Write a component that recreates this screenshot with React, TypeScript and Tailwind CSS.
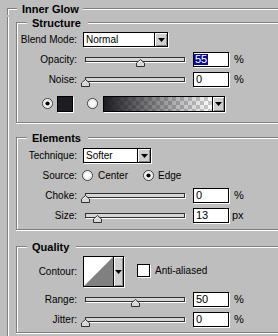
import React from "react";

const Tri = () => (
  <svg width="7" height="4" viewBox="0 0 7 4" className="shrink-0">
    <path d="M0 0H7L3.5 4Z" fill="#000" />
  </svg>
);

function Radio({ on }: { on?: boolean }) {
  return (
    <svg width="11" height="11" viewBox="0 0 11 11" className="shrink-0">
      <circle cx="5.5" cy="5.5" r="5" fill="#fff" stroke="#3a3a3a" />
      <circle cx="5.5" cy="5.5" r="3.6" fill="none" stroke="#e6e6e6" />
      {on && <circle cx="5.5" cy="5.5" r="2.1" fill="#000" />}
    </svg>
  );
}

function TitleRow({ title, corner, text }: { title: string; corner: string; text: string }) {
  return (
    <div className="flex h-[12px] items-center">
      <div className={`self-stretch flex flex-col ${corner}`}>
        <div className="h-[5px]" />
        <div className="flex-1 border-l border-t border-[#808080] shadow-[inset_1px_1px_0_#fff]" />
      </div>
      <span className={`text-[11px] font-bold leading-[12px] ${text}`}>{title}</span>
      <div className="h-[2px] flex-1 border-t border-b border-t-[#808080] border-b-white" />
    </div>
  );
}

function InnerGroup({
  title,
  top,
  body,
  children,
}: {
  title: string;
  top: string;
  body: string;
  children: React.ReactNode;
}) {
  return (
    <div className={top}>
      <TitleRow title={title} corner="w-[11px]" text="pl-[5px] pr-[7px]" />
      <div
        className={`border-l border-b border-[#808080] shadow-[inset_1px_0_0_#fff,0_1px_0_#fff] ${body}`}
      >
        {children}
      </div>
    </div>
  );
}

function Row({ label, h, children }: { label: string; h?: string; children?: React.ReactNode }) {
  return (
    <div className={`flex items-center ${h ?? "h-[15px]"}`}>
      <span className="w-[60px] shrink-0 text-right whitespace-nowrap">{label}</span>
      {children}
    </div>
  );
}

function Select({ w, text }: { w: string; text: string }) {
  return (
    <div className={`ml-[6px] flex h-[15px] border border-black bg-white shadow-[1px_1px_0_#fff] ${w}`}>
      <span className="flex-1 pl-[2px] leading-[13px]">{text}</span>
      <div className="flex w-[13px] items-center justify-center border-l border-black bg-[#cfcfcf] shadow-[inset_1px_1px_0_#fff,inset_-1px_-1px_0_#8a8a8a]">
        <Tri />
      </div>
    </div>
  );
}

function Slider({ v }: { v: number }) {
  return (
    <div className="relative ml-[4px] h-[15px] w-[112px] shrink-0">
      <div className="ml-[4px] mt-[5px] h-[5px] w-[100px] border border-[#303030] bg-[#d6d6d6] shadow-[1px_1px_0_#fff]" />
      <svg
        width="9"
        height="8"
        viewBox="0 0 9 8"
        className="absolute top-[7px]"
        style={{ left: v }}
      >
        <path d="M4.5 0.5L8.5 4V7.5H0.5V4Z" fill="#d8d8d8" stroke="#303030" />
        <path d="M1.5 4.3L4.5 1.7" stroke="#fff" />
      </svg>
    </div>
  );
}

function Field({ children, sel }: { children: React.ReactNode; sel?: boolean }) {
  return (
    <div
      className={`flex h-[15px] w-[36px] shrink-0 items-stretch border border-black bg-white text-[11px] leading-[13px] shadow-[1px_1px_0_#fff] ${
        sel ? "pl-0 py-[1px]" : "pl-[2px]"
      }`}
    >
      {sel ? (
        <span className="bg-[#0a0a84] px-[1px] leading-[11px] text-white">{children}</span>
      ) : (
        <span>{children}</span>
      )}
    </div>
  );
}

const Unit = ({ children, ml }: { children: React.ReactNode; ml: string }) => (
  <span className={`text-[11px] ${ml}`}>{children}</span>
);

export default function App() {
  return (
    <div className="h-[336px] w-[278px] overflow-hidden bg-[#bebebe] pt-[3px] font-['Liberation_Sans',Arial,sans-serif] text-[10px] leading-[15px] text-black">
      <div className="ml-[7px]">
        <TitleRow title="Inner Glow" corner="w-[10px]" text="pl-[5px] pr-[4px]" />
        <div className="border-l border-[#808080] pb-[20px] pl-[8px] shadow-[inset_1px_0_0_#fff]">
          <InnerGroup title="Structure" top="mt-[2px]" body="pt-[3px] pb-[10px]">
            <div className="flex flex-col gap-[5px]">
              <Row label="Blend Mode:">
                <Select w="w-[85px]" text="Normal" />
              </Row>
              <Row label="Opacity:">
                <Slider v={55} />
                <Field sel>55</Field>
                <Unit ml="ml-[5px]">%</Unit>
              </Row>
              <Row label="Noise:">
                <Slider v={0} />
                <Field>0</Field>
                <Unit ml="ml-[5px]">%</Unit>
              </Row>
            </div>
            <div className="mt-[8px] flex h-[17px] items-center pl-[25px]">
              <Radio on />
              <div className="ml-[4px] h-[16px] w-[16px] border border-black bg-[#1c1c22] shadow-[1px_1px_0_#fff]" />
              <span className="ml-[14px] flex">
                <Radio />
              </span>
              <div className="ml-[5px] flex h-[16px] w-[122px] border border-black shadow-[1px_1px_0_#fff]">
                <div className="flex-1 [background-image:linear-gradient(to_right,#1c1c22,rgba(28,28,34,0)),repeating-conic-gradient(#cccccc_0%_25%,#ffffff_0%_50%)] [background-size:100%_100%,8px_8px]" />
                <div className="flex w-[12px] items-center justify-center border-l border-black bg-[#cfcfcf] shadow-[inset_1px_1px_0_#fff,inset_-1px_-1px_0_#8a8a8a]">
                  <Tri />
                </div>
              </div>
            </div>
          </InnerGroup>

          <InnerGroup title="Elements" top="mt-[9px]" body="pt-[4px] pb-[6px]">
            <div className="flex flex-col gap-[5px]">
              <Row label="Technique:">
                <Select w="w-[68px]" text="Softer" />
              </Row>
              <Row label="Source:">
                <span className="ml-[5px] flex">
                  <Radio />
                </span>
                <span className="ml-[5px] w-[45px]">Center</span>
                <Radio on />
                <span className="ml-[4px]">Edge</span>
              </Row>
              <Row label="Choke:">
                <Slider v={0} />
                <Field>0</Field>
                <Unit ml="ml-[5px]">%</Unit>
              </Row>
              <Row label="Size:">
                <Slider v={12} />
                <Field>13</Field>
                <Unit ml="ml-[3px]">px</Unit>
              </Row>
            </div>
          </InnerGroup>

          <InnerGroup title="Quality" top="mt-[11px]" body="pt-[3px] pb-[5px]">
            <Row label="Contour:" h="h-[31px]">
              <div className="ml-[6px] flex h-[31px] w-[41px] border border-black shadow-[1px_1px_0_#fff]">
                <svg width="29" height="29" viewBox="0 0 29 29" className="shrink-0">
                  <rect width="29" height="29" fill="#fff" />
                  <path d="M0 29L29 0V29Z" fill="#808080" />
                </svg>
                <div className="flex flex-1 items-center justify-center border-l border-black bg-[#cfcfcf] shadow-[inset_1px_1px_0_#fff,inset_-1px_-1px_0_#8a8a8a]">
                  <Tri />
                </div>
              </div>
              <div className="ml-[13px] mb-[2px] h-[13px] w-[13px] border border-black bg-white shadow-[1px_1px_0_#fff]" />
              <span className="ml-[5px] mb-[2px]">Anti-aliased</span>
            </Row>
            <div className="mt-[5px] flex flex-col gap-[5px]">
              <Row label="Range:">
                <Slider v={50} />
                <Field>50</Field>
                <Unit ml="ml-[5px]">%</Unit>
              </Row>
              <Row label="Jitter:">
                <Slider v={0} />
                <Field>0</Field>
                <Unit ml="ml-[5px]">%</Unit>
              </Row>
            </div>
          </InnerGroup>
        </div>
      </div>
    </div>
  );
}
